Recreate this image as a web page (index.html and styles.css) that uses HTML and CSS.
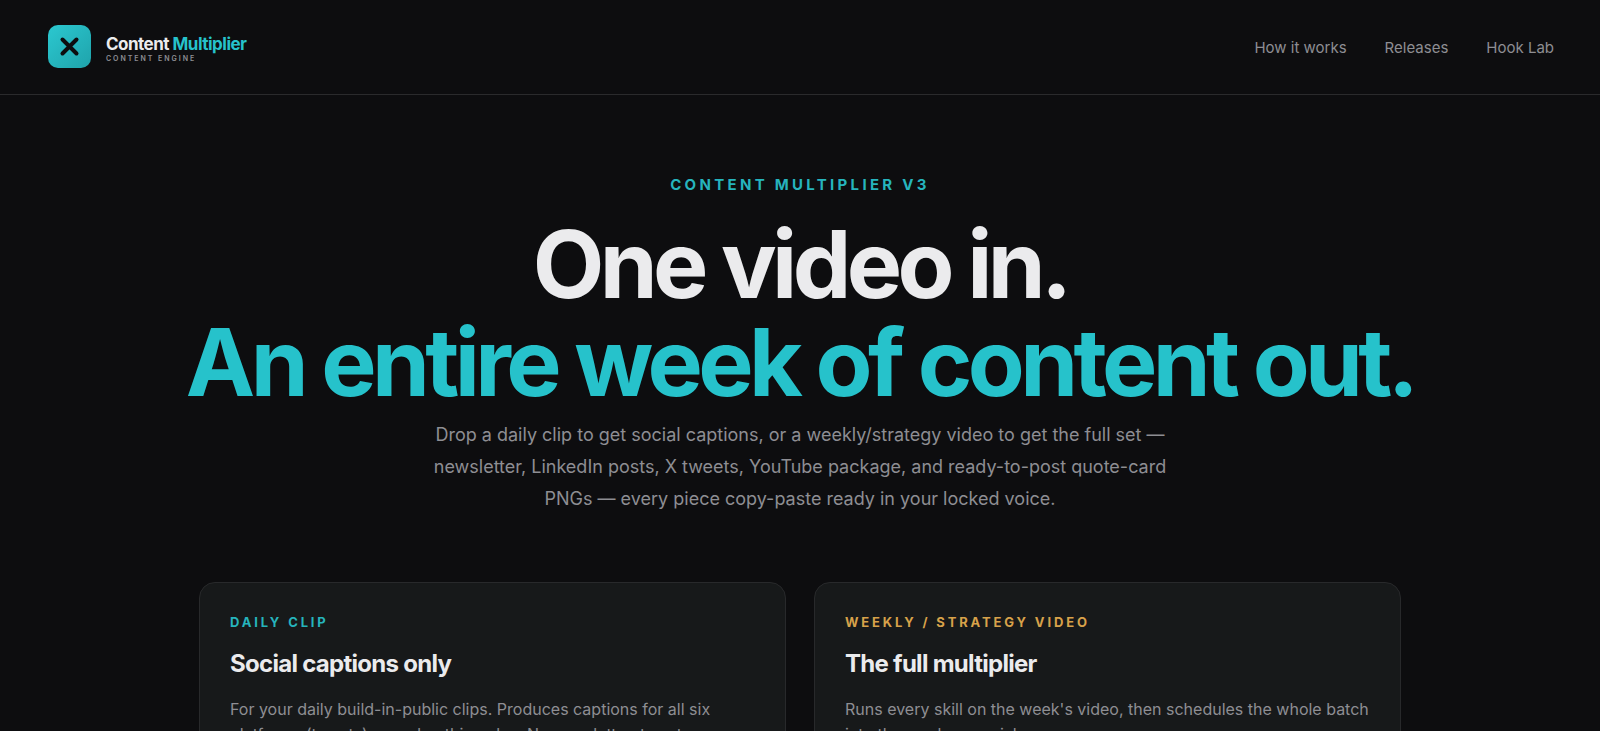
FILE: index.html
```html
<!DOCTYPE html>
<html lang="en">

<head>
  <meta charset="UTF-8">
  <meta name="viewport" content="width=device-width, initial-scale=1.0">
  <title>Content Multiplier</title>

  <link rel="stylesheet" href="styles.css">
</head>

<body>
  <header class="site-header">
    <a class="brand" href="#">
      <svg class="brand-icon" viewBox="0 0 43 43" aria-hidden="true">
        <defs>
          <linearGradient id="brand-fill" x1="0" y1="0" x2="1" y2="1">
            <stop offset="0" stop-color="#2bc8d0" />
            <stop offset="1" stop-color="#1fa3ab" />
          </linearGradient>
        </defs>
        <rect width="43" height="43" rx="10" fill="url(#brand-fill)" />
        <path d="M14.5 14.5 L28.5 28.5 M28.5 14.5 L14.5 28.5" stroke="#0d0d0f" stroke-width="4" stroke-linecap="round" />
      </svg>
      <span class="brand-text">
        <span class="brand-name">Content <span class="accent">Multiplier</span></span>
        <span class="brand-tag">Content Engine</span>
      </span>
    </a>
    <nav class="site-nav">
      <a href="#how">How it works</a>
      <a href="#releases">Releases</a>
      <a href="#hooks">Hook Lab</a>
    </nav>
  </header>

  <main>
    <section class="hero">
      <p class="eyebrow">Content Multiplier v3</p>
      <h1>One video in.<br><span class="accent">An entire week of content out.</span></h1>
      <p class="lede">Drop a daily clip to get social captions, or a weekly/strategy video to get the full set — newsletter, LinkedIn posts, X tweets, YouTube package, and ready-to-post quote-card PNGs — every piece copy-paste ready in your locked voice.</p>
    </section>

    <section class="modes" id="how">
      <article class="card">
        <p class="card-label">Daily clip</p>
        <h2>Social captions only</h2>
        <p class="card-text">For your daily build-in-public clips. Produces captions for all six platforms (tweets) — and nothing else. No newsletter, tweets.</p>
      </article>
      <article class="card">
        <p class="card-label card-label-gold">Weekly / Strategy video</p>
        <h2>The full multiplier</h2>
        <p class="card-text">Runs every skill on the week's video, then schedules the whole batch into the week as social.</p>
      </article>
    </section>
  </main>
</body>

</html>
```
FILE: styles.css
```css
* {
  box-sizing: border-box;
}

body {
  background: #0d0d0f;
  color: #ebebed;
  font-family: Inter, "Liberation Sans", sans-serif;
  margin: 0;
}

a {
  color: inherit;
  text-decoration: none;
}

h1,
h2,
p {
  margin: 0;
}

.accent {
  color: #26c2cb;
}

.site-header {
  align-items: center;
  border-bottom: 1px solid #2a2a2c;
  display: flex;
  justify-content: space-between;
  padding: 25px 46px 26px 48px;
}

.brand {
  align-items: center;
  display: flex;
  gap: 15px;
}

.brand-icon {
  height: 43px;
  width: 43px;
}

.brand-text {
  display: flex;
  flex-direction: column;
  padding-top: 4px;
}

.brand-name {
  font-size: 17px;
  font-weight: 700;
  letter-spacing: -0.03em;
  line-height: 20px;
}

.brand-tag {
  color: #8e8e93;
  font-size: 7px;
  font-weight: 600;
  letter-spacing: 0.28em;
  line-height: 10px;
  text-transform: uppercase;
}

.site-nav {
  color: #8e8e93;
  display: flex;
  font-size: 15px;
  gap: 38px;
  padding-top: 2px;
}

.hero {
  align-items: center;
  display: flex;
  flex-direction: column;
  padding: 80px 32px 0;
  text-align: center;
}

.eyebrow {
  color: #26b4bd;
  font-size: 15px;
  font-weight: 700;
  letter-spacing: 0.22em;
  line-height: 20px;
  text-transform: uppercase;
}

h1 {
  font-size: 93px;
  font-weight: 700;
  letter-spacing: -0.05em;
  line-height: 98px;
  margin-top: 20px;
}

.lede {
  color: #8e8e93;
  font-size: 18px;
  line-height: 32px;
  margin-top: 8px;
  max-width: 760px;
}

.modes {
  display: grid;
  gap: 28px;
  grid-template-columns: 1fr 1fr;
  margin: 67px auto 0;
  max-width: 1202px;
}

.card {
  background: #17191a;
  border: 1px solid #28292b;
  border-radius: 16px;
  padding: 30px;
}

.card-label {
  color: #26b4bd;
  font-size: 13px;
  font-weight: 700;
  letter-spacing: 0.22em;
  line-height: 18px;
  text-transform: uppercase;
}

.card-label-gold {
  color: #d8a24a;
}

h2 {
  font-size: 24px;
  font-weight: 700;
  letter-spacing: -0.03em;
  line-height: 32px;
  margin-top: 17px;
}

.card-text {
  color: #8e8e93;
  font-size: 16px;
  line-height: 25px;
  margin-top: 17px;
}
```
